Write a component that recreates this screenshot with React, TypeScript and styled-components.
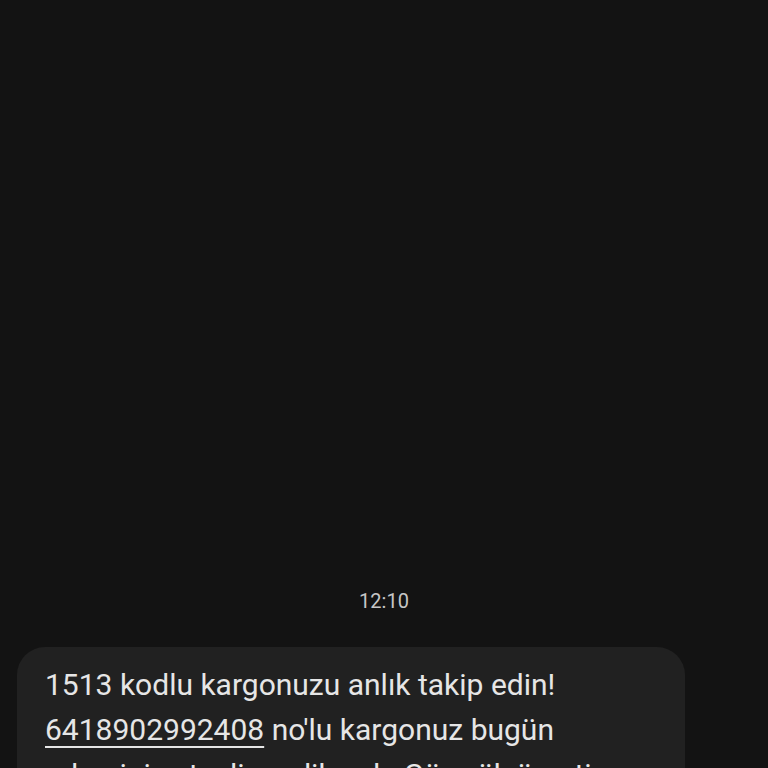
import React from 'react'
import styled, { createGlobalStyle } from 'styled-components'

const GlobalStyle = createGlobalStyle`
  html, body {
    margin: 0;
    padding: 0;
    background: #131313;
  }
  body {
    font-family: Roboto, "Noto Sans", sans-serif;
    -webkit-font-smoothing: antialiased;
  }
`

const Thread = styled.div`
  height: 100vh;
  overflow: hidden;
  background: #131313;
  display: flex;
  flex-direction: column;
  padding: 589px 0 0;
  box-sizing: border-box;
`

const Timestamp = styled.div`
  text-align: center;
  font-size: 20px;
  line-height: 24px;
  color: #c6c6c6;
  margin-bottom: 34px;
`

const Bubble = styled.div`
  align-self: flex-start;
  width: 668px;
  margin-left: 17px;
  box-sizing: border-box;
  padding: 15px 28px 24px;
  background: #212121;
  border-radius: 28px;
  color: #e6e6e6;
  font-size: 30px;
  line-height: 45px;
`

const Line = styled.div``

const TrackingLink = styled.span`
  text-decoration: underline;
  text-decoration-thickness: 2px;
  text-underline-offset: 6px;
`

const message = {
  time: '12:10',
  code: '1513',
  trackingNo: '6418902992408',
}

export default function App() {
  return (
    <>
      <GlobalStyle />
      <Thread>
        <Timestamp>{message.time}</Timestamp>
        <Bubble>
          <Line>{message.code} kodlu kargonuzu anlık takip edin!</Line>
          <Line>
            <TrackingLink>{message.trackingNo}</TrackingLink> no'lu kargonuz bugün
          </Line>
          <Line>adresinize teslim edilecek. Gümrük ücreti ödenmelidir.</Line>
        </Bubble>
      </Thread>
    </>
  )
}
